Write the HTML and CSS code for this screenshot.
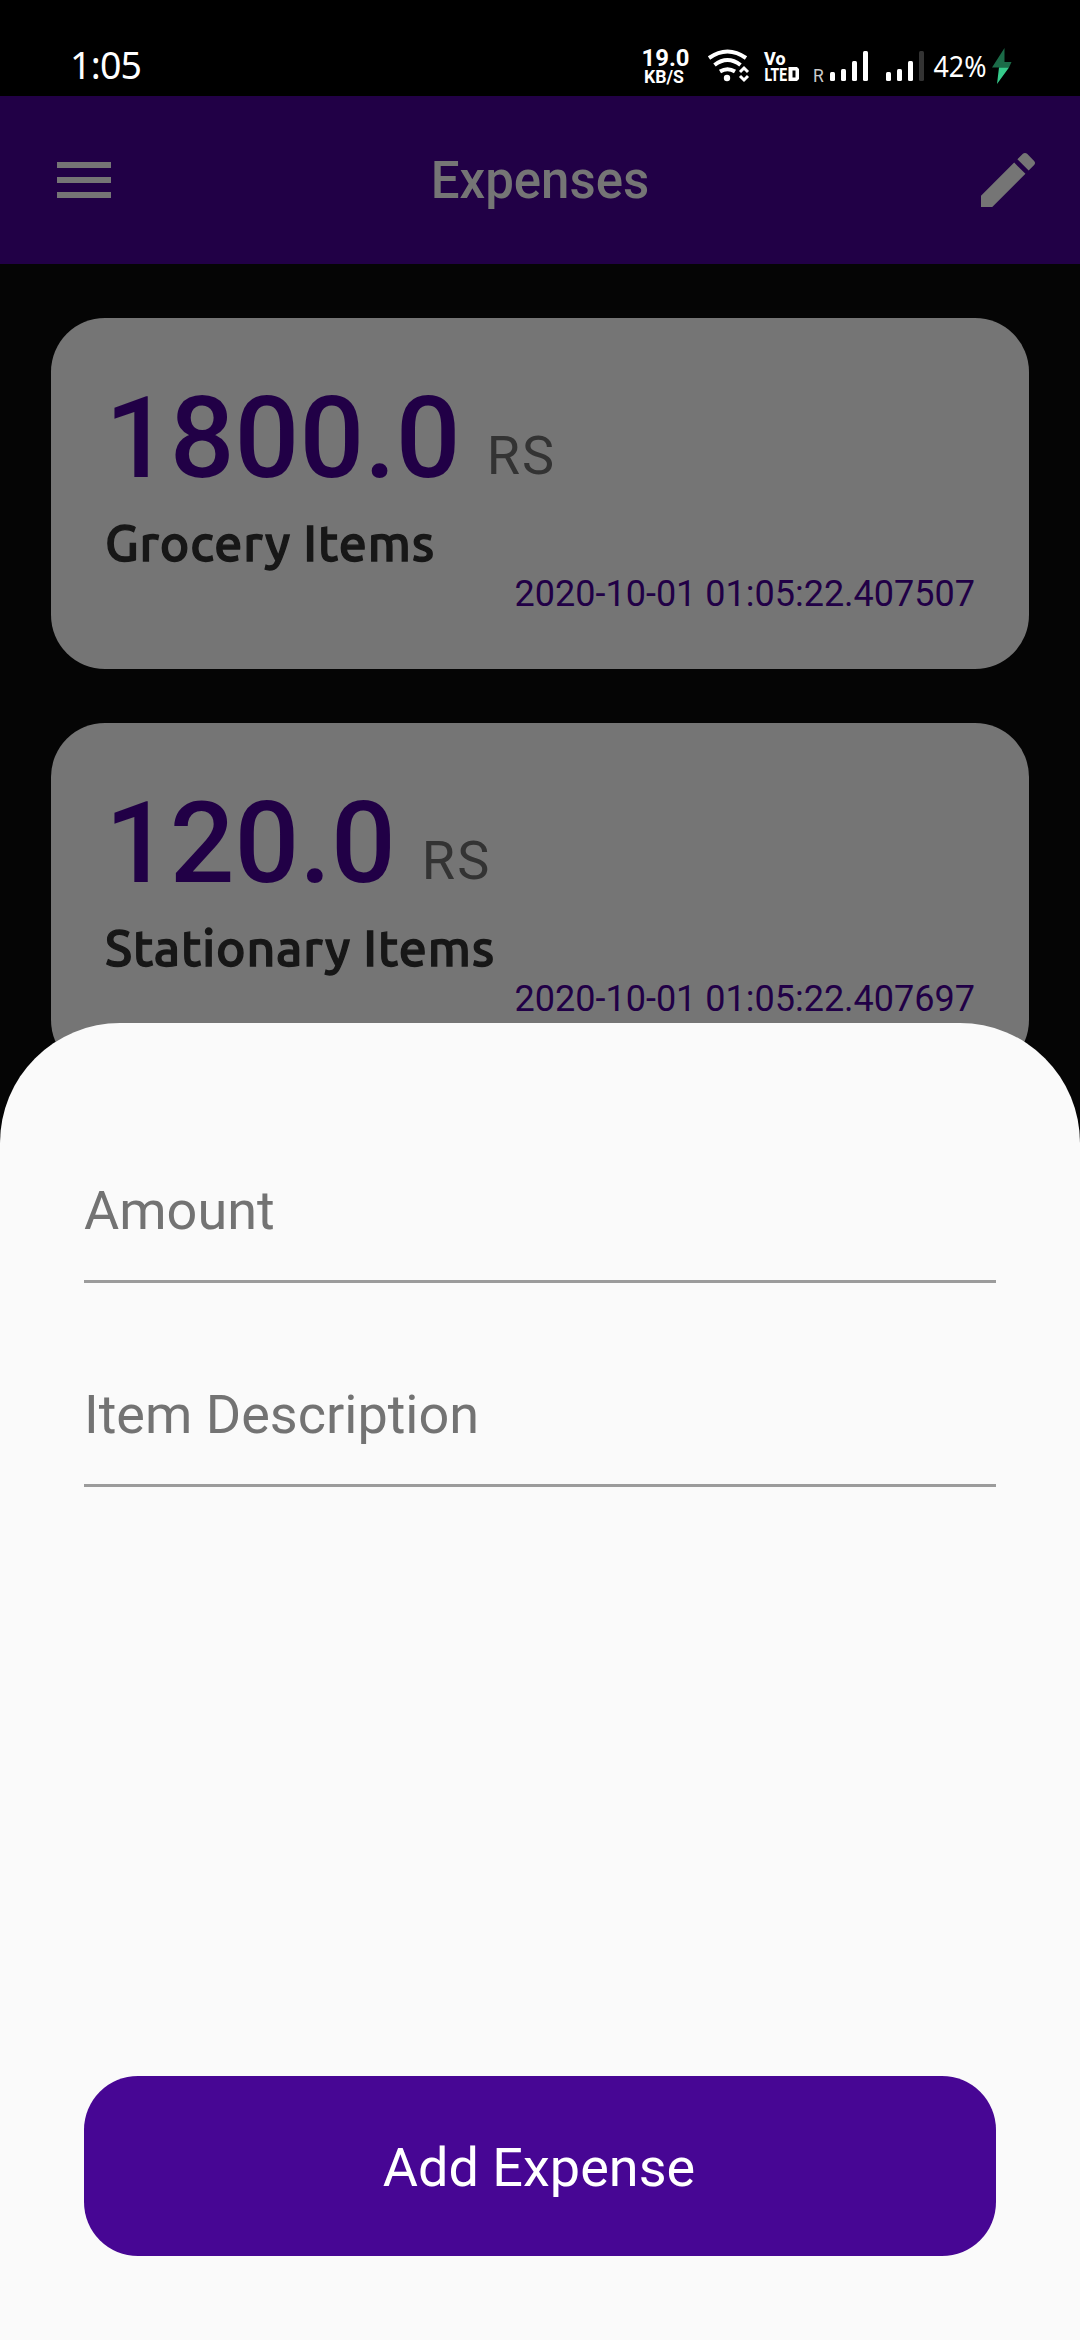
FILE: index.html
```html
<!DOCTYPE html>
<html lang="en">
<head>
<meta charset="utf-8">
<title>Expenses</title>
<link rel="stylesheet" href="styles.css">
</head>
<body>
<div class="screen">
  <header class="status">
    <span class="clock">1:05</span>
    <div class="status-icons">
      <svg width="400" height="96" viewBox="0 0 400 96">
        <g class="net">
          <text x="21.5" y="66" font-size="23.5" textLength="48" lengthAdjust="spacingAndGlyphs">19.0</text>
          <text x="24" y="83" font-size="17.5" textLength="40" lengthAdjust="spacingAndGlyphs">KB/S</text>
        </g>
        <g class="wifi">
          <path d="M89 58Q107.500 45 126 58M94.500 65Q107.500 55 120.500 65M100 71.500Q107.500 67 115 71.500"/>
          <circle cx="107" cy="78" r="3.200"/>
          <path class="chev" d="M120 72l4-4 4 4M120 76l4 4 4-4"/>
        </g>
        <g class="volte">
          <text x="144" y="65" font-size="18.500" textLength="21.500" lengthAdjust="spacingAndGlyphs">Vo</text>
          <text x="144.500" y="81" font-size="19" textLength="22.500" lengthAdjust="spacingAndGlyphs">LTE</text>
          <path d="M168.500 67h8.500l2 2v10l-2 2h-8.500zM172.500 70.500v7h3v-7z" fill-rule="evenodd"/>
        </g>
        <text class="roam" x="193" y="82" font-size="17.500">R</text>
        <g class="bars">
          <rect x="210" y="72" width="5" height="9" rx="1.500"/>
          <rect x="221" y="69" width="5" height="12" rx="1.500"/>
          <rect x="232" y="61" width="5" height="20" rx="1.500"/>
          <rect x="243" y="51" width="5" height="30" rx="1.500"/>
          <rect x="266" y="72" width="5" height="9" rx="1.500"/>
          <rect x="277" y="69" width="5" height="12" rx="1.500"/>
          <rect x="288" y="61" width="5" height="20" rx="1.500"/>
          <rect class="off" x="299" y="51" width="5" height="30" rx="1.500"/>
        </g>
        <text class="batt" x="313.500" y="76.500" font-size="29" textLength="53" lengthAdjust="spacingAndGlyphs">42%</text>
        <path fill="#1b6b48" d="M384.500 48L372 67.500h17L391.500 62h-7z"/>
        <path fill="#36cb8b" d="M372 67.500h7L377 84l12-16.500z"/>
      </svg>
    </div>
  </header>

  <nav class="appbar">
    <svg class="icon" viewBox="0 0 24 24"><path d="M3 18h18v-2H3v2zm0-5h18v-2H3v2zm0-7v2h18V6H3z"/></svg>
    <h1 class="title">Expenses</h1>
    <svg class="icon" viewBox="0 0 24 24"><path d="M3 17.250V21h3.750L17.810 9.940l-3.750-3.750L3 17.250zM20.710 7.040c.39-.39.39-1.020 0-1.410l-2.340-2.340c-.39-.39-1.020-.39-1.410 0l-1.830 1.830 3.750 3.750 1.830-1.830z"/></svg>
  </nav>

  <main class="list">
    <article class="card">
      <div class="amount"><span class="value">1800.0</span><span class="unit">RS</span></div>
      <div class="desc">Grocery Items</div>
      <time class="date">2020-10-01 01:05:22.407507</time>
    </article>
    <article class="card">
      <div class="amount"><span class="value">120.0</span><span class="unit">RS</span></div>
      <div class="desc">Stationary Items</div>
      <time class="date">2020-10-01 01:05:22.407697</time>
    </article>
  </main>

  <section class="sheet">
    <div class="field">Amount</div>
    <div class="field">Item Description</div>
    <button class="add">Add Expense</button>
  </section>
</div>
</body>
</html>
```

FILE: styles.css
```css
* { box-sizing: border-box; }

body {
  margin: 0;
  background: #050505;
  font-family: Roboto, "Liberation Sans", sans-serif;
}

.screen {
  position: relative;
  width: 1080px;
  height: 2340px;
  overflow: hidden;
  background: #050505;
}

/* Status bar */
.status {
  display: flex;
  justify-content: space-between;
  height: 96px;
  padding: 0 60px 0 70px;
  background: #000;
  color: #fff;
}

.clock {
  padding-top: 46px;
  font: 400 37.5px/38px "Noto Sans", sans-serif;
  letter-spacing: -0.8px;
}

.status-icons svg { display: block; fill: #fff; }
.net { font-weight: 700; }
.volte { font-weight: 800; }
.wifi path { fill: none; stroke: #fff; stroke-width: 4; }
.wifi .chev { stroke-width: 3; }
.roam { fill: #ccc; }
.bars .off { fill: #333; }
.batt { font-family: "Noto Sans", sans-serif; }

/* App bar */
.appbar {
  display: flex;
  align-items: center;
  justify-content: space-between;
  height: 168px;
  padding: 0 36px 0 48px;
  background: #210046;
  color: #757575;
}

.icon { width: 72px; height: 72px; fill: #757575; }

.title {
  margin: 2px 12px 0 0;
  font-size: 51px;
  font-weight: 500;
  line-height: 60px;
}

/* Expense list */
.list {
  display: flex;
  flex-direction: column;
  gap: 54px;
  padding: 54px 51px;
}

.card {
  display: flex;
  flex-direction: column;
  height: 351px;
  padding: 63px 54px 0;
  border-radius: 54px;
  background: #757575;
}

.amount { display: flex; align-items: flex-end; gap: 26px; height: 114px; }
.value { color: #210046; font-size: 114px; font-weight: 500; line-height: 114px; }
.unit { margin-bottom: 12px; color: #333; font-size: 54px; line-height: 54px; letter-spacing: 2px; }

.desc {
  margin-top: 23px;
  color: #171717;
  font: 500 50px/48px Ubuntu, "Noto Sans", sans-serif;
  letter-spacing: 0.8px;
  -webkit-text-stroke: 1.3px #171717;
}

.date {
  align-self: flex-end;
  margin-top: 10px;
  color: #210046;
  font-size: 36px;
  line-height: 36px;
}

/* Bottom sheet */
.sheet {
  position: absolute;
  inset: 1023.4px 0 0;
  display: flex;
  flex-direction: column;
  padding: 137.6px 84px 84px;
  border-radius: 120px 120px 0 0;
  background: #fafafa;
}

.field {
  height: 122px;
  margin-bottom: 82px;
  padding-top: 23px;
  border-bottom: 3px solid #9b9b9b;
  color: #737373;
  font-size: 54px;
  line-height: 54px;
}

.add {
  height: 180px;
  margin-top: auto;
  padding: 3px 2px 0 0;
  border: 0;
  border-radius: 54px;
  background: #470694;
  color: #fff;
  font: 400 54px/60px Roboto, "Liberation Sans", sans-serif;
}
```
